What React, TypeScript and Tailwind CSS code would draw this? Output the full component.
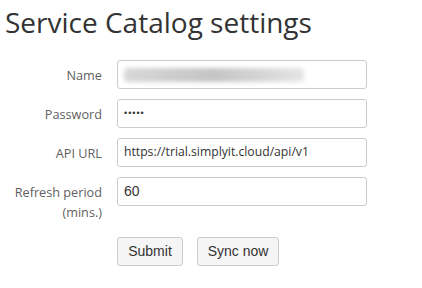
import React from "react";

const seg = { fontFamily: '"Open Sans", "Liberation Sans", sans-serif' };

function Row({ label, children }: { label: React.ReactNode; children: React.ReactNode }) {
  return (
    <div className="flex items-start gap-[15px]">
      <div className="w-[102px] shrink-0 text-right text-[12.7px] leading-[20px] text-[#5f5f5f] pt-[5px]" style={seg}>
        {label}
      </div>
      <div className="w-[250px] h-[29px] rounded-[3px] border border-[#ccc] bg-white flex items-center px-[6px] text-[13px] text-[#333]">
        {children}
      </div>
    </div>
  );
}

export default function App() {
  return (
    <div className="w-[422px] h-[288px] bg-white overflow-hidden">
      <h1 className="pl-[5px] pt-[4px] text-[28px] leading-[37px] text-[#333] font-normal" style={seg}>
        Service Catalog settings
      </h1>
      <div className="mt-[19px] flex flex-col gap-[10px]">
        <Row label="Name">
          <div className="relative w-[180px] h-[14px]">
            <div className="absolute inset-0 bg-gradient-to-r from-[#d8d8d8] via-[#c4c4c4] to-[#e6e6e6] blur-[2px] rounded" />
          </div>
        </Row>
        <Row label="Password">
          <span className="text-[9px] tracking-[1px] text-[#333]" style={{ fontFamily: '"Liberation Sans", sans-serif' }}>
            •••••
          </span>
        </Row>
        <Row label="API URL">
          <span style={seg} className="text-[12.2px]">https://trial.simplyit.cloud/api/v1</span>
        </Row>
        <Row label={<>Refresh period<br />(mins.)</>}>
          <span style={{ fontFamily: '"Liberation Sans", sans-serif' }} className="text-[14px]">60</span>
        </Row>
      </div>
      <div className="mt-[15px] ml-[117px] flex gap-[14px]" style={{ fontFamily: '"Liberation Sans", sans-serif' }}>
        <button className="h-[29px] w-[66px] rounded-[3px] border border-[#ccc] bg-[#f5f5f5] text-[14px] text-[#333]">
          Submit
        </button>
        <button className="h-[29px] w-[82px] rounded-[3px] border border-[#ccc] bg-[#f5f5f5] text-[14px] text-[#333]">
          Sync now
        </button>
      </div>
    </div>
  );
}
